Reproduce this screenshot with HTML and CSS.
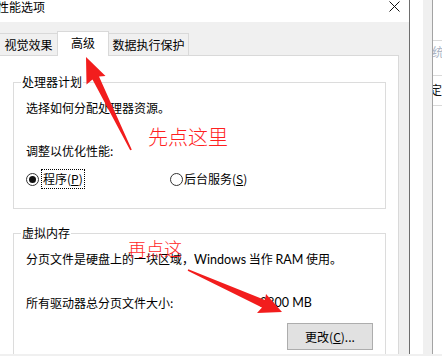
FILE: index.html
```html
<!DOCTYPE html>
<html lang="zh-CN">
<head>
<meta charset="utf-8">
<title>性能选项</title>
<link rel="stylesheet" href="styles.css">
</head>
<body>
<div class="screen">
  <div class="main">
    <div class="dialog">
      <div class="titlebar">
        <span class="title">性能选项</span>
        <svg class="close" width="11" height="11" viewBox="0 0 11 11"><path d="M0.5 0.5L10.5 10.5M10.5 0.5L0.5 10.5" stroke="#111" stroke-width="1" fill="none"/></svg>
      </div>
      <div class="body">
        <div class="tabs">
          <div class="tab t1">视觉效果</div>
          <div class="tab active">高级</div>
          <div class="tab t3">数据执行保护</div>
        </div>
        <div class="panel">
          <fieldset class="group g1">
            <legend>处理器计划</legend>
            <p class="line first">选择如何分配处理器资源。</p>
            <p class="line second">调整以优化性能:</p>
            <div class="radios">
              <div class="radio"><span class="dot on"></span><span class="focus">程序(<u>P</u>)</span></div>
              <div class="radio"><span class="dot"></span><span class="rtext">后台服务(<u>S</u>)</span></div>
            </div>
          </fieldset>
          <fieldset class="group g2">
            <legend>虚拟内存</legend>
            <p class="line first">分页文件是硬盘上的一块区域，<span class="latin">Windows</span> 当作 <span class="latin">RAM</span> 使用。</p>
            <div class="size"><span>所有驱动器总分页文件大小:</span><span class="latin">2800 MB</span></div>
            <div class="btnrow"><button class="btn">更改(<u>C</u>)...</button></div>
          </fieldset>
        </div>
      </div>
    </div>
    <div class="sep"></div>
    <div class="bgwin">
      <div class="w1"></div>
      <div class="w2"></div>
      <div class="w3"></div>
      <div class="w4">
        <div class="row r1"></div>
        <div class="row r2"><span class="faint">统</span></div>
        <div class="row r3"><span class="dark">定需</span></div>
      </div>
    </div>
  </div>
  <div class="notes">
    <svg class="arrows" width="442" height="356" viewBox="0 0 442 356">
      <polygon fill="#f21d1d" points="86,57 105.5,76 99,76.5 131.8,149.7 130.2,150.3 92.5,79.5 86.5,84.5"/>
      <polygon fill="#f21d1d" points="282,312 257,313 262,307.5 187.7,270.7 188.3,269.3 265,300 266,294"/>
    </svg>
    <span class="note n1">先点这里</span>
    <span class="note n2">再点这</span>
  </div>
</div>
</body>
</html>
```

FILE: styles.css
```css
* { box-sizing: border-box; }
html, body { margin: 0; padding: 0; }
body {
  width: 442px;
  height: 356px;
  overflow: hidden;
  font-family: "Noto Sans CJK SC", "Noto Sans", sans-serif;
  font-size: 12px;
  color: #000;
  background: #f0f0f0;
}
.screen {
  position: relative;
  width: 442px;
  height: 356px;
  background: #f0f0f0;
}
.main {
  display: flex;
  height: 354px;
}
.dialog {
  width: 409px;
  display: flex;
  flex-direction: column;
}
.titlebar {
  height: 22px;
  background: #fff;
  display: flex;
  align-items: flex-start;
  justify-content: space-between;
  overflow: hidden;
}
.title {
  margin-left: -3px;
  line-height: 14px;
  font-size: 12px;
}
.close {
  margin: 1px 9px 0 0;
}
.body {
  flex: 1;
  display: flex;
  flex-direction: column;
  background: #f0f0f0;
  padding: 9px 10px 0 0;
  min-height: 0;
}
.tabs {
  height: 24px;
  display: flex;
  align-items: flex-end;
  position: relative;
  z-index: 1;
}
.tab {
  height: 22px;
  border: 1px solid #d9d9d9;
  border-bottom: none;
  background: #f0f0f0;
  display: flex;
  align-items: center;
  justify-content: center;
  line-height: 16px;
}
.t1 { width: 58px; margin-left: -1px; border-right: none; }
.active {
  width: 52px;
  height: 25px;
  margin-bottom: -1px;
  background: #fff;
  padding-bottom: 2px;
}
.t3 { width: 80px; border-left: none; }
.panel {
  flex: 1;
  background: #fff;
  border-top: 1px solid #d9d9d9;
  border-right: 1px solid #d9d9d9;
  padding: 18px 12px 0 13px;
  overflow: hidden;
  min-height: 0;
}
.group {
  margin: 0;
  border: 1px solid #dcdcdc;
  padding: 0 12px 19px 12px;
  min-width: 0;
}
.group legend {
  line-height: 16px;
  padding: 0 1px;
  margin-left: -5px;
}
.g2 { margin-top: 16px; padding-bottom: 40px; }
.line {
  margin: 0;
  line-height: 16px;
}
.line.first { margin-top: 10px; }
.line.second { margin-top: 27px; }
.latin {
  font-family: "Lato", "Noto Sans CJK SC", sans-serif;
  font-size: 12.5px;
}
.radios {
  margin-top: 10px;
  display: grid;
  grid-template-columns: 144px auto;
  height: 20px;
  align-items: center;
}
.radio {
  display: flex;
  align-items: center;
}
.dot {
  width: 13px;
  height: 13px;
  border: 1px solid #333;
  border-radius: 50%;
  display: flex;
  align-items: center;
  justify-content: center;
  background: #fff;
}
.dot.on::after {
  content: "";
  width: 7px;
  height: 7px;
  border-radius: 50%;
  background: #111;
}
.focus {
  margin-left: 2px;
  border: 1px dotted #000;
  padding: 1px;
  line-height: 16px;
}
.rtext { margin-left: 1px; line-height: 16px; }
u { text-decoration: underline; text-underline-offset: 1px; }
.size {
  margin-top: 27px;
  display: grid;
  grid-template-columns: 234px auto;
  line-height: 16px;
}
.btnrow {
  margin-top: 12px;
  display: flex;
  justify-content: flex-end;
}
.btn {
  width: 86px;
  height: 27px;
  background: #e1e1e1;
  border: 1px solid #adadad;
  border-radius: 0;
  font-family: inherit;
  font-size: 12px;
  color: #000;
  padding: 0;
  line-height: 16px;
}
.sep {
  width: 1px;
  background: #6e6e6e;
}
.bgwin {
  width: 32px;
  display: flex;
}
.w1 { width: 13px; background: #fff; }
.w2 { width: 9px; background: #f0f0f0; }
.w3 { width: 1px; background: #a3a3a3; }
.w4 { width: 9px; background: #fff; overflow: hidden; }
.row { border-bottom: 1px solid #dadada; overflow: hidden; white-space: nowrap; }
.r1 { height: 41px; }
.r2 { height: 35px; line-height: 22px; }
.r3 { height: 30px; line-height: 28px; }
.faint { color: #a9b3c4; margin-left: -1px; }
.dark { color: #111; margin-left: -3px; }
.notes {
  position: absolute;
  left: 0;
  top: 0;
  width: 442px;
  height: 356px;
  pointer-events: none;
}
.arrows { position: absolute; left: 0; top: 0; }
.note {
  position: absolute;
  color: #ff1f1f;
  font-family: "Noto Sans CJK SC", sans-serif;
  font-weight: 300;
  white-space: nowrap;
}
.n1 { left: 148px; top: 124px; font-size: 20px; line-height: 26px; }
.n2 { left: 128px; top: 236px; font-size: 18px; line-height: 24px; }
```
